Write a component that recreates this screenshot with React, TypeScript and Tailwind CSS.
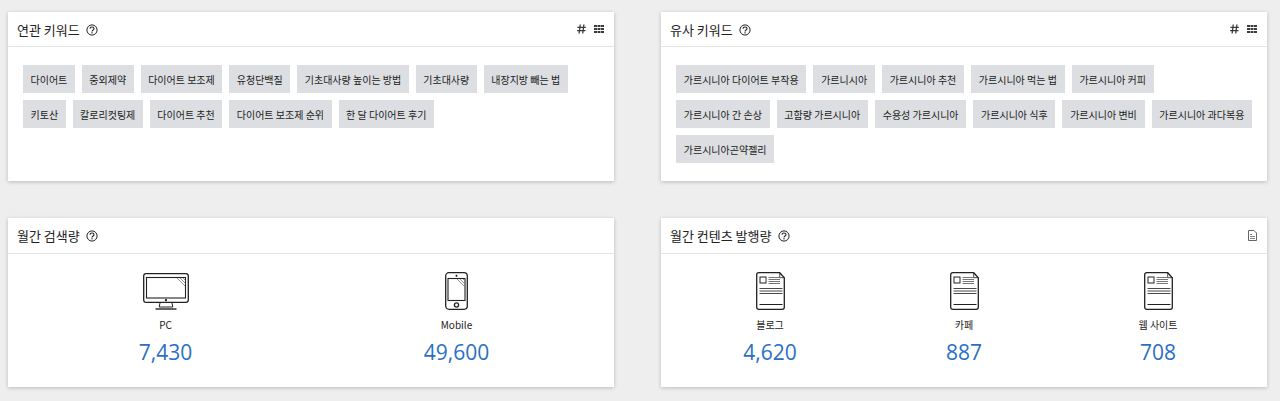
const F = '"Noto Sans CJK KR","Noto Sans",sans-serif';

function Help() {
  return (
    <svg width="12" height="12" viewBox="0 0 12 12" fill="none" stroke="#222" className="ml-[6px] mt-[1px]">
      <circle cx="6" cy="6" r="5.1" strokeWidth="1" />
      <path d="M4 4.8c0-1.1.9-1.8 2-1.8s2 .7 2 1.7c0 1.4-2 1.3-2 2.8" strokeWidth="1.1" />
      <rect x="5.4" y="8.2" width="1.2" height="1.2" fill="#222" stroke="none" />
    </svg>
  );
}
function Hash() {
  return (
    <svg width="9" height="10" viewBox="0 0 9 10" fill="none" stroke="#3a3a3a" strokeWidth="1.3">
      <path d="M3.3 .5 2.1 9.5M6.9 .5 5.7 9.5M.4 3.3h8.4M.1 6.7h8.4" />
    </svg>
  );
}
function GridIcon() {
  return (
    <svg width="10" height="8" viewBox="0 0 10 8" fill="#3a3a3a">
      {[0, 3, 6].map((y) => [0, 3.5, 7].map((x) => <rect key={`${x}-${y}`} x={x} y={y} width="3" height="2" />))}
    </svg>
  );
}
function DocSmall() {
  return (
    <svg width="9" height="11" viewBox="0 0 9 11" fill="none" stroke="#666" strokeWidth="1">
      <path d="M.5.5h5.5l2.5 2.5v7.5h-8z" />
      <path d="M2 4.5h2M2 6.5h5M2 8.5h5" strokeWidth=".8" />
    </svg>
  );
}
function Monitor() {
  return (
    <svg width="46" height="37" viewBox="0 0 46 37" fill="none" stroke="#222">
      <rect x=".7" y=".7" width="44.6" height="28.6" rx="2.4" strokeWidth="1.3" />
      <rect x="3.5" y="4.5" width="39" height="20.5" strokeWidth="1.1" />
      <path d="M34 5l8 8M37 5l5.5 5.5M40 5l2.5 2.5" strokeWidth=".8" stroke="#777" />
      <circle cx="23" cy="27.2" r="1.1" fill="#111" stroke="none" />
      <path d="M17 30l-.8 4h13.6l-.8-4" strokeWidth="1" />
      <path d="M12.5 36h21" strokeWidth="1.4" />
    </svg>
  );
}
function Phone() {
  return (
    <svg width="23" height="38" viewBox="0 0 23 38" fill="none" stroke="#222">
      <rect x=".7" y=".7" width="21.6" height="36.6" rx="3.2" strokeWidth="1.3" />
      <rect x="3" y="6.5" width="17" height="22" strokeWidth="1.1" />
      <path d="M12 7l8 8M15 7l5 5M18 7l2 2" strokeWidth=".8" stroke="#777" />
      <circle cx="11.5" cy="3.7" r="1" fill="#111" stroke="none" />
      <circle cx="11.5" cy="33" r="2.1" strokeWidth="1.3" />
    </svg>
  );
}
function Doc() {
  return (
    <svg width="29" height="38" viewBox="0 0 29 38" fill="none" stroke="#222">
      <path d="M2.7.7h21l4.6 5v29.6a2 2 0 0 1-2 2H2.7a2 2 0 0 1-2-2V2.7a2 2 0 0 1 2-2z" strokeWidth="1.3" />
      <path d="M23.7 1v4.7h4.6" strokeWidth=".8" />
      <rect x="4" y="5" width="6" height="6" strokeWidth="1" />
      <path d="M12.5 5.5h11.5M12.5 7.5h11.5M12.5 9.5h11.5M12.5 11.5h11.5" strokeWidth=".9" stroke="#666" />
      <path d="M3.5 16.5h23M3.5 19h23M3.5 21.5h23" strokeWidth=".9" stroke="#333" />
      <path d="M3.5 32.5h23" strokeWidth="1" />
    </svg>
  );
}

function Card({ title, right, tall, children }: { title: string; right?: React.ReactNode; tall?: boolean; children: React.ReactNode }) {
  return (
    <div className="h-[169px] bg-white shadow-[0_1px_4px_rgba(0,0,0,0.22)] flex flex-col">
      <div className={`${tall ? "h-[36px]" : "h-[35px]"} shrink-0 border-b border-[#e4e4e4] flex items-center pl-[9px] pr-[10px]`}>
        <span className="text-[13px] leading-none text-[#222]">{title}</span>
        <Help />
        <div className="ml-auto flex items-center gap-[8px]">{right}</div>
      </div>
      {children}
    </div>
  );
}

function Tags({ rows, pad }: { rows: string[][]; pad: string }) {
  return (
    <div className="flex flex-col gap-[7px] pt-[18px] pl-[15px]">
      {rows.map((row, i) => (
        <div key={i} className="flex gap-[7px]">
          {row.map((t) => (
            <span key={t} className={`h-[28px] flex items-center ${pad} bg-[#dcdee1] text-[10px] text-[#222] whitespace-nowrap`}>
              {t}
            </span>
          ))}
        </div>
      ))}
    </div>
  );
}

function Stat({ icon, label, value }: { icon: React.ReactNode; label: string; value: string }) {
  return (
    <div className="flex flex-col items-center">
      <div className="h-[38px] flex items-center justify-center">{icon}</div>
      <div className="mt-[7px] h-[16px] leading-[16px] text-[10px] text-[#222]">{label}</div>
      <div className="mt-[4px] h-[30px] leading-[30px] text-[21px] font-normal text-[#2a6fc4] font-['Open_Sans']">{value}</div>
    </div>
  );
}

export default function App() {
  const a = [
    ["다이어트","중외제약","다이어트 보조제","유청단백질","기초대사량 높이는 방법","기초대사량","내장지방 빼는 법"],
    ["키토산","칼로리컷팅제","다이어트 추천","다이어트 보조제 순위","한 달 다이어트 후기"],
  ];
  const b = [
    ["가르시니아 다이어트 부작용","가르니시아","가르시니아 추천","가르시니아 먹는 법","가르시니아 커피"],
    ["가르시니아 간 손상","고함량 가르시니아","수용성 가르시니아","가르시니아 식후","가르시니아 변비","가르시니아 과다복용"],
    ["가르시니아곤약젤리"],
  ];
  return (
    <div className="h-[401px] bg-[#eeeeee] pt-[12px] pl-[8px] pr-[13px] overflow-hidden" style={{ fontFamily: F }}>
      <div className="grid grid-cols-2 gap-x-[47px] gap-y-[37px]">
        <Card title="연관 키워드" right={<><Hash /><GridIcon /></>}>
          <Tags rows={a} pad="px-[7.5px]" />
        </Card>
        <Card title="유사 키워드" right={<><Hash /><GridIcon /></>}>
          <Tags rows={b} pad="px-[7.75px]" />
        </Card>
        <Card title="월간 검색량" tall>
          <div className="grid grid-cols-2 px-[12px] pt-[18px]">
            <Stat icon={<Monitor />} label="PC" value="7,430" />
            <Stat icon={<Phone />} label="Mobile" value="49,600" />
          </div>
        </Card>
        <Card title="월간 컨텐츠 발행량" tall right={<DocSmall />}>
          <div className="grid grid-cols-3 px-[12px] pt-[18px]">
            <Stat icon={<Doc />} label="블로그" value="4,620" />
            <Stat icon={<Doc />} label="카페" value="887" />
            <Stat icon={<Doc />} label="웹 사이트" value="708" />
          </div>
        </Card>
      </div>
    </div>
  );
}
